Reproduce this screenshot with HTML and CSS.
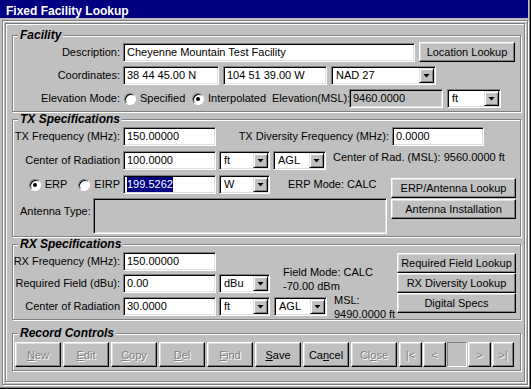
FILE: index.html
```html
<!DOCTYPE html>
<html lang="en">

<head>
    <meta charset="UTF-8">
    <title>Fixed Facility Lookup</title>
    <link rel="stylesheet" href="styles.css">
</head>

<body>
    <div class="window">
        <div class="titlebar">Fixed Facility Lookup</div>
        <div class="frame">
        <div class="panel">

            <fieldset class="group group-facility">
                <legend>Facility</legend>
                <div class="row">
                    <span class="lbl">Description:</span>
                    <div class="edit w-desc">Cheyenne Mountain Test Facility</div>
                    <button class="btn btn-loc">Location Lookup</button>
                </div>
                <div class="row row-gap4">
                    <span class="lbl">Coordinates:</span>
                    <div class="edit w-lat">38 44 45.00 N</div>
                    <div class="edit w-lon">104 51 39.00 W</div>
                    <div class="combo w-datum"><span class="combo-val">NAD 27</span><span class="combo-btn"></span></div>
                </div>
                <div class="row row-gap4">
                    <span class="lbl">Elevation Mode:</span>
                    <div class="opt opt-spec"><span class="radio"></span>Specified</div>
                    <div class="opt opt-interp"><span class="radio on"></span>Interpolated</div>
                    <span class="lbl lbl-msl">Elevation(MSL):</span>
                    <div class="edit edit-off w-elev">9460.0000</div>
                    <div class="combo w-elev-unit"><span class="combo-val">ft</span><span class="combo-btn"></span></div>
                </div>
            </fieldset>

            <fieldset class="group group-tx">
                <legend>TX Specifications</legend>
                <div class="row row-first">
                    <span class="lbl">TX Frequency (MHz):</span>
                    <div class="edit w-num">150.00000</div>
                    <span class="lbl lbl-div">TX Diversity Frequency (MHz):</span>
                    <div class="edit w-div">0.0000</div>
                </div>
                <div class="row row-gap5">
                    <span class="lbl">Center of Radiation</span>
                    <div class="edit w-num">100.0000</div>
                    <div class="combo w-unit"><span class="combo-val">ft</span><span class="combo-btn"></span></div>
                    <div class="combo w-ref"><span class="combo-val">AGL</span><span class="combo-btn"></span></div>
                    <span class="note note-top">Center of Rad. (MSL): 9560.0000 ft</span>
                </div>
                <div class="tx-lower">
                    <div class="tx-left">
                        <div class="row">
                            <div class="lbl radios">
                                <div class="opt"><span class="radio on"></span>ERP</div>
                                <div class="opt opt-eirp"><span class="radio"></span>EIRP</div>
                            </div>
                            <div class="edit w-num"><span class="sel">199.5262</span></div>
                            <div class="combo w-unit"><span class="combo-val">W</span><span class="combo-btn"></span></div>
                            <span class="note erp-mode">ERP Mode: CALC</span>
                        </div>
                        <div class="antenna">
                            <span class="ant-lbl">Antenna Type:</span>
                            <div class="ant-box"></div>
                        </div>
                    </div>
                    <div class="btn-col tx-btns">
                        <button class="btn">ERP/Antenna Lookup</button>
                        <button class="btn">Antenna Installation</button>
                    </div>
                </div>
            </fieldset>

            <fieldset class="group group-rx">
                <legend>RX Specifications</legend>
                <div class="rx-body">
                    <div class="rx-left">
                        <div class="row row-first">
                            <span class="lbl">RX Frequency (MHz):</span>
                            <div class="edit w-num">150.00000</div>
                        </div>
                        <div class="row row-gap3">
                            <span class="lbl">Required Field (dBu):</span>
                            <div class="edit w-num">0.00</div>
                            <div class="combo w-unit"><span class="combo-val">dBu</span><span class="combo-btn"></span></div>
                            <div class="note note-up field-mode">
                                <span>Field Mode: CALC</span>
                                <span>-70.00 dBm</span>
                            </div>
                        </div>
                        <div class="row row-gap4">
                            <span class="lbl">Center of Radiation</span>
                            <div class="edit w-num">30.0000</div>
                            <div class="combo w-unit"><span class="combo-val">ft</span><span class="combo-btn"></span></div>
                            <div class="combo w-ref rx-ref"><span class="combo-val">AGL</span><span class="combo-btn"></span></div>
                            <div class="note note-mid msl">
                                <span>MSL:</span>
                                <span>9490.0000 ft</span>
                            </div>
                        </div>
                    </div>
                    <div class="btn-col rx-btns">
                        <button class="btn">Required Field Lookup</button>
                        <button class="btn">RX Diversity Lookup</button>
                        <button class="btn">Digital Specs</button>
                    </div>
                </div>
            </fieldset>

            <fieldset class="group group-rec">
                <legend>Record Controls</legend>
                <div class="rec-row">
                    <button class="btn rec off"><u>N</u>ew</button>
                    <button class="btn rec off"><u>E</u>dit</button>
                    <button class="btn rec off"><u>C</u>opy</button>
                    <button class="btn rec off"><u>D</u>el</button>
                    <button class="btn rec off"><u>F</u>ind</button>
                    <button class="btn rec"><u>S</u>ave</button>
                    <button class="btn rec">Ca<u>n</u>cel</button>
                    <button class="btn rec off">Cl<u>o</u>se</button>
                    <button class="btn nav nav-first off">|&lt;</button>
                    <button class="btn nav off">&lt;</button>
                    <div class="rec-pos"></div>
                    <button class="btn nav off">&gt;</button>
                    <button class="btn nav nav-last off">&gt;|</button>
                </div>
            </fieldset>

        </div>
        </div>
    </div>
</body>

</html>
```

FILE: styles.css
```css
body {
    margin: 0;
    background-color: #c0c0c0;
    font-family: "Liberation Sans", Arial, sans-serif;
    font-size: 11px;
    line-height: 13px;
    color: #000;
}

.window {
    width: 531px;
    height: 389px;
    box-sizing: border-box;
    display: flex;
    flex-direction: column;
    background-color: #c0c0c0;
    border-right: 1px solid #000;
    border-bottom: 1px solid #000;
    box-shadow: inset -1px -1px #808080;
    padding: 0 2px 2px 0;
}

.titlebar {
    height: 18px;
    box-sizing: border-box;
    padding: 4px 0 0 6px;
    background-color: #000080;
    color: #fff;
    font-size: 12px;
    font-weight: bold;
    line-height: 14px;
}

/* etched double frame round the client area */
.frame {
    flex: 1;
    display: flex;
    margin: 2px 0 1px 2px;
    border: 1px solid #808080;
    box-shadow: inset 1px 1px #fff, 1px 1px #fff;
    padding: 2px;
}

.panel {
    flex: 1;
    border: 1px solid #808080;
    box-shadow: inset 1px 1px #fff, 1px 1px #fff;
    padding: 5px 3px 0 6px;
}

/* group boxes */
.group {
    margin: 0;
    padding: 0 0 3px 0;
    min-width: 0;
    border: 1px solid #808080;
    box-shadow: inset 1px 1px #fff, 1px 1px #fff;
}

.group legend {
    margin-left: 5px;
    padding: 0 2px;
    background-color: #c0c0c0;
    font-size: 12px;
    font-weight: bold;
    font-style: italic;
    line-height: 13px;
}

.group-tx {
    margin-top: 1px;
    padding-bottom: 2px;
}

.group-rx {
    margin-top: 1px;
}

.group-rec {
    margin-top: 7px;
}

.row {
    display: flex;
    align-items: center;
}

.row-first {
    margin-top: 1px;
}

.row-gap3 {
    margin-top: 3px;
}

.row-gap4 {
    margin-top: 4px;
}

.row-gap5 {
    margin-top: 5px;
}

.lbl {
    width: 107px;
    margin-right: 3px;
    text-align: right;
    white-space: nowrap;
    flex-shrink: 0;
}

/* edit fields */
.edit,
.combo {
    height: 19px;
    box-sizing: border-box;
    flex-shrink: 0;
    border: 1px solid;
    border-color: #808080 #fff #fff #808080;
    box-shadow: inset 1px 1px #000, inset -1px -1px #dfdfdf;
    background-color: #fff;
    white-space: nowrap;
    overflow: hidden;
}

.edit {
    padding: 1px 3px;
    line-height: 15px;
}

.edit-off {
    background-color: #c0c0c0;
}

.sel {
    display: inline-block;
    background-color: #000080;
    color: #fff;
    line-height: 15px;
}

.combo {
    display: flex;
    padding: 1px;
}

.combo-val {
    flex: 1;
    padding-left: 3px;
    line-height: 15px;
}

.combo-btn {
    width: 15px;
    height: 15px;
    box-sizing: border-box;
    display: flex;
    align-items: center;
    justify-content: center;
    border: 1px solid;
    border-color: #dfdfdf #000 #000 #dfdfdf;
    box-shadow: inset 1px 1px #fff, inset -1px -1px #808080;
    background-color: #c0c0c0;
}

.combo-btn::after {
    content: "";
    width: 7px;
    height: 4px;
    background-color: #000;
    clip-path: polygon(0 0, 100% 0, 50% 100%);
}

/* buttons */
.btn {
    box-sizing: border-box;
    margin: 0;
    padding: 0;
    border: 1px solid;
    border-color: #fff #000 #000 #fff;
    box-shadow: inset -1px -1px #808080, inset 1px 1px #dfdfdf;
    background-color: #c0c0c0;
    font-family: inherit;
    font-size: 11px;
    color: #000;
    white-space: nowrap;
}

.btn.off {
    color: #808080;
    text-shadow: 1px 1px #fff;
}

/* radios */
.opt {
    display: flex;
    align-items: center;
    gap: 4px;
    white-space: nowrap;
    flex-shrink: 0;
}

.radio {
    width: 12px;
    height: 12px;
    box-sizing: border-box;
    display: flex;
    align-items: center;
    justify-content: center;
    border-radius: 50%;
    border: 1px solid;
    border-color: #808080 #fff #fff #808080;
    box-shadow: inset 1px 1px #000;
    background-color: #fff;
}

.radio.on::after {
    content: "";
    width: 4px;
    height: 4px;
    border-radius: 50%;
    background-color: #000;
}

/* facility */
.w-desc {
    width: 292px;
}

.btn-loc {
    width: 96px;
    height: 20px;
    margin-left: 4px;
}

.w-lat {
    width: 96px;
}

.w-lon {
    width: 104px;
    margin-left: 4px;
}

.w-datum {
    width: 105px;
    margin-left: 4px;
}

.opt-spec {
    width: 68px;
    margin-left: 1px;
}

.opt-interp {
    width: 80px;
}

.lbl-msl {
    width: 74px;
}

.w-elev {
    width: 94px;
}

.w-elev-unit {
    width: 54px;
    margin-left: 4px;
}

/* tx */
.w-num {
    width: 93px;
}

.lbl-div {
    width: 173px;
}

.w-div {
    width: 92px;
}

.w-unit {
    width: 51px;
    margin-left: 3px;
}

.w-ref {
    width: 53px;
    margin-left: 3px;
}

.note {
    margin-left: 7px;
    white-space: nowrap;
}

.note-top {
    align-self: flex-start;
}

.erp-mode {
    margin-left: 18px;
}

.radios {
    display: flex;
    justify-content: flex-end;
    align-items: center;
}

.opt-eirp {
    margin-left: 11px;
}

.tx-lower {
    display: flex;
    margin-top: 5px;
}

.tx-left {
    width: 378px;
}

.antenna {
    display: flex;
    margin-top: 4px;
}

.ant-lbl {
    width: 73px;
    margin: 7px 0 0 7px;
    white-space: nowrap;
}

.ant-box {
    width: 294px;
    height: 36px;
    box-sizing: border-box;
    border: 1px solid;
    border-color: #808080 #fff #fff #808080;
    box-shadow: inset 1px 1px #000, inset -1px -1px #dfdfdf;
}

.btn-col {
    display: flex;
    flex-direction: column;
}

.tx-btns {
    width: 125px;
    padding-top: 3px;
    gap: 1px;
}

.tx-btns .btn {
    height: 20px;
}

/* rx */
.rx-body {
    display: flex;
}

.rx-left {
    width: 384px;
}

.rx-ref {
    margin-left: 4px;
}

.note-up,
.note-mid {
    height: 19px;
    display: flex;
    flex-direction: column;
    line-height: 14px;
}

.note-up {
    justify-content: flex-end;
}

.note-mid {
    justify-content: center;
}

.field-mode {
    margin-left: 13px;
}

.msl {
    margin-left: 7px;
}

.rx-btns {
    width: 119px;
    padding-top: 2px;
}

.rx-btns .btn {
    height: 20px;
}

/* record controls */
.rec-row {
    display: flex;
    margin: 2px 0 0 2px;
}

.rec {
    width: 46px;
    height: 25px;
    margin-right: 2px;
}

.nav {
    width: 23px;
    height: 25px;
    margin-right: 1px;
}

.nav-last {
    width: 22px;
}

.rec-pos {
    width: 20px;
    height: 25px;
    box-sizing: border-box;
    margin-right: 1px;
    border: 1px solid;
    border-color: #808080 #fff #fff #808080;
}
```
